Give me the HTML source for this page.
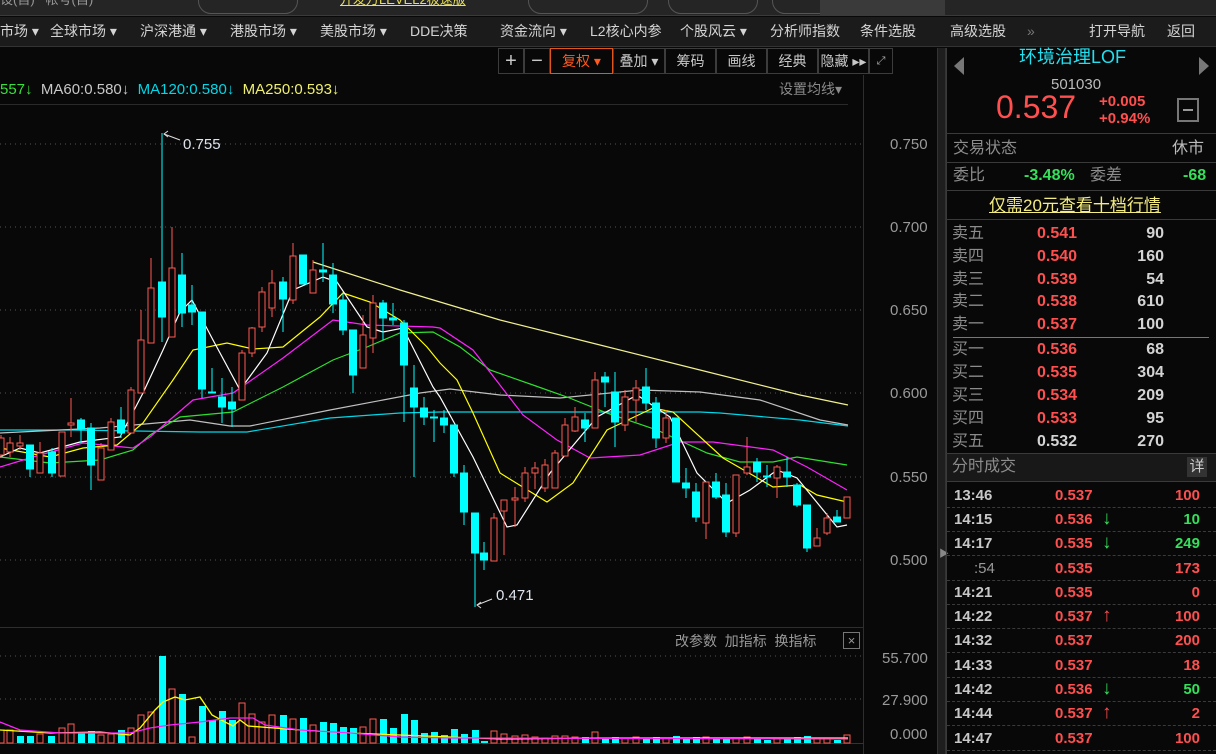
<!DOCTYPE html>
<html><head><meta charset="utf-8"><style>
*{margin:0;padding:0;box-sizing:border-box}
body{width:1216px;height:754px;background:#080808;overflow:hidden;position:relative;font-family:"Liberation Sans","Noto Sans CJK SC",sans-serif;color:#ccc;line-height:1.2}
.a{position:absolute;white-space:nowrap}
.top{left:0;top:0;width:1216px;height:16px;background:#252525;border-bottom:1px solid #3a3a3a}
.pill{position:absolute;top:-12px;height:26px;border:1px solid #555;border-radius:13px}
.menu{left:0;top:17px;width:1216px;height:30px;background:#1b1b1b;border-bottom:1px solid #333;font-size:14px;color:#d4d4d4}
.menu span{position:absolute;top:6px}
.tb{position:absolute;top:48px;height:26px;border:1px solid #3c3c3c;font-size:14px;color:#c8c8c8;text-align:center;line-height:24px}
.r{color:#ff4f4f}.g{color:#35e05a}.gr{color:#9a9a9a}.w{color:#d8d8d8}
.ob{position:absolute;left:952px;font-size:16px;width:212px;height:22px}
.ob span{line-height:22px;top:0}
.ob .l{position:absolute;left:0;color:#8c8c8c}
.ob .p{position:absolute;left:85px;font-weight:bold}
.ob .v{position:absolute;right:0;font-weight:bold;color:#d4d4d4;text-align:right}
.tr{position:absolute;left:947px;width:269px;height:24px;border-bottom:1px dashed #3a3a3a;font-size:15px;font-weight:bold}
.tr .t{position:absolute;left:7px;top:3px;color:#c8c8c8}
.tr .p{position:absolute;left:108px;top:3px;color:#ff4f4f}
.tr .v{position:absolute;right:16px;top:3px;text-align:right}
.tr .ar{position:absolute;left:155px;top:0px;font-size:19px}
.lb{line-height:20px}
</style></head><body>
<div class="a top">
<div class="pill" style="left:198px;width:100px"></div>
<div class="a" style="left:340px;top:-8px;font-size:13px;color:#e8e060;text-decoration:underline">开发万LEVEL2极速版</div>
<div class="pill" style="left:528px;width:120px"></div>
<div class="pill" style="left:668px;width:90px"></div>
<div class="pill" style="left:772px;width:130px"></div>
<div class="a" style="left:820px;top:0;width:125px;height:16px;background:#3a3a3a"></div>
<div class="a" style="left:0;top:-8px;font-size:13px;color:#999">设(自) &nbsp; 帐号(自)</div>
</div>
<div class="a menu">
<span style="left:0">市场 ▾</span><span style="left:50px">全球市场 ▾</span><span style="left:140px">沪深港通 ▾</span><span style="left:230px">港股市场 ▾</span><span style="left:320px">美股市场 ▾</span><span style="left:410px">DDE决策</span><span style="left:500px">资金流向 ▾</span><span style="left:590px">L2核心内参</span><span style="left:680px">个股风云 ▾</span><span style="left:770px">分析师指数</span><span style="left:860px">条件选股</span><span style="left:950px">高级选股</span><span style="left:1027px;color:#777">»</span><span style="left:1089px">打开导航</span><span style="left:1167px">返回</span>
</div>
<div class="tb" style="left:498px;width:26px;font-size:20px">+</div>
<div class="tb" style="left:524px;width:26px;font-size:20px">−</div>
<div class="tb" style="left:550px;width:63px;border-color:#e0561b;color:#ff5a1f">复权 ▾</div>
<div class="tb" style="left:613px;width:52px">叠加 ▾</div>
<div class="tb" style="left:665px;width:51px">筹码</div>
<div class="tb" style="left:716px;width:51px">画线</div>
<div class="tb" style="left:767px;width:51px">经典</div>
<div class="tb" style="left:818px;width:51px">隐藏 ▸▸</div>
<div class="tb" style="left:869px;width:24px;font-size:11px;color:#aaa">⤢</div>
<div class="a" style="left:0;top:81px;font-size:15px"><span style="color:#39e03b">557↓</span> <span style="color:#c8c8c8">&nbsp;MA60:0.580↓</span> <span style="color:#00d8e8">&nbsp;MA120:0.580↓</span> <span style="color:#f0f070">&nbsp;MA250:0.593↓</span></div>
<div class="a" style="left:779px;top:81px;font-size:14px;color:#8a8a8a">设置均线▾</div>
<div class="a" style="left:0;top:104px;width:848px;height:1px;background:#2a2a2a"></div>
<div class="a" style="left:863px;top:75px;width:1px;height:679px;background:#2e2e2e"></div>
<div class="a" style="left:0;top:627px;width:863px;height:1px;background:#2e2e2e"></div>
<div class="a" style="left:937px;top:48px;width:9px;height:706px;background:#1e1e1e;border-left:1px solid #333;border-right:1px solid #333"></div>
<div class="a" style="left:939px;top:549px;font-size:10px;color:#888">▶</div>
<div class="a gr" style="left:890px;top:136px;font-size:15px">0.750</div>
<div class="a gr" style="left:890px;top:219px;font-size:15px">0.700</div>
<div class="a gr" style="left:890px;top:302px;font-size:15px">0.650</div>
<div class="a gr" style="left:890px;top:385px;font-size:15px">0.600</div>
<div class="a gr" style="left:890px;top:469px;font-size:15px">0.550</div>
<div class="a gr" style="left:890px;top:552px;font-size:15px">0.500</div>
<div class="a gr" style="left:882px;top:650px;font-size:15px">55.700</div>
<div class="a gr" style="left:882px;top:692px;font-size:15px">27.900</div>
<div class="a gr" style="left:890px;top:726px;font-size:15px">0.000</div>
<div class="a" style="left:675px;top:633px;font-size:14px;color:#999">改参数 &nbsp;加指标 &nbsp;换指标</div>
<div class="a" style="left:843px;top:632px;width:17px;height:17px;border:1px solid #777;color:#999;font-size:13px;line-height:15px;text-align:center">×</div>
<svg class="a" style="left:0;top:0" width="864" height="754" viewBox="0 0 864 754">
<g stroke="#555" stroke-dasharray="1 4" stroke-width="1">
<line x1="0" y1="144" x2="864" y2="144"/><line x1="0" y1="227" x2="864" y2="227"/><line x1="0" y1="310" x2="864" y2="310"/><line x1="0" y1="393" x2="864" y2="393"/><line x1="0" y1="477" x2="864" y2="477"/><line x1="0" y1="560" x2="864" y2="560"/>
<line x1="0" y1="656" x2="864" y2="656"/><line x1="0" y1="699" x2="864" y2="699"/>
</g>
<line x1="0" y1="743.5" x2="864" y2="743.5" stroke="#333"/>
<g fill="none" stroke-width="1.2">
<polyline stroke="#f0f090" points="313,262 400,290 500,320 600,345 700,370 800,395 848,405"/>
<polyline stroke="#00d8e8" points="0,430 70,430 200,432 247,432 330,418 400,413 440,412 700,412 720,413 800,420 848,426"/>
<polyline stroke="#c0c0c0" points="0,433 100,428 190,420 230,426 250,426 330,410 420,393 450,389 500,395 560,398 640,390 700,392 760,400 820,420 848,425"/>
<polyline stroke="#2ee02e" points="0,457 50,463 100,460 133,450 150,435 180,417 233,412 283,387 333,360 367,347 400,333 433,332 460,347 490,370 533,385 567,397 607,413 657,430 707,453 740,462 773,462 797,457 847,465"/>
<polyline stroke="#ff22ff" points="0,467 33,457 83,443 133,448 150,437 193,400 233,393 283,358 333,320 367,325 433,327 440,328 473,350 523,415 557,440 590,458 640,455 680,442 713,442 773,450 807,467 847,490"/>
<polyline stroke="#ffff00" points="0,448 50,457 83,448 117,445 143,423 173,380 193,350 227,343 253,349 283,347 320,317 343,293 370,302 400,320 427,347 440,363 457,380 473,413 500,473 547,502 573,483 607,430 653,408 673,412 723,458 773,487 800,485 817,495 847,502"/>
<polyline stroke="#ffffff" points="0,457 20,448 40,453 80,442 120,437 143,393 163,350 180,312 192,300 213,340 240,390 267,353 293,290 323,277 337,282 367,327 383,332 403,328 433,387 440,397 473,457 507,527 517,525 550,473 597,417 637,395 670,417 697,473 727,503 750,490 777,470 797,478 837,527 847,525"/>
</g>
<g stroke="#00ffff" fill="#00ffff">
<line x1="30" y1="445" x2="30" y2="477"/><rect x="26.5" y="445" width="7" height="24"/>
<line x1="52" y1="448" x2="52" y2="477"/><rect x="48.5" y="452" width="7" height="21"/>
<line x1="81" y1="418" x2="81" y2="443"/><rect x="77.5" y="420" width="7" height="9"/>
<line x1="91" y1="423" x2="91" y2="490"/><rect x="87.5" y="428" width="7" height="37"/>
<line x1="121" y1="407" x2="121" y2="438"/><rect x="117.5" y="420" width="7" height="13"/>
<line x1="162" y1="133" x2="162" y2="342"/><rect x="158.5" y="282" width="7" height="35"/>
<line x1="182" y1="253" x2="182" y2="327"/><rect x="178.5" y="275" width="7" height="38"/>
<line x1="192" y1="285" x2="192" y2="325"/><rect x="188.5" y="305" width="7" height="7"/>
<line x1="202" y1="312" x2="202" y2="398"/><rect x="198.5" y="312" width="7" height="77"/>
<line x1="212" y1="368" x2="212" y2="393"/><rect x="208.5" y="392" width="7" height="1"/>
<line x1="222" y1="378" x2="222" y2="423"/><rect x="218.5" y="397" width="7" height="10"/>
<line x1="232" y1="387" x2="232" y2="427"/><rect x="228.5" y="402" width="7" height="7"/>
<line x1="283" y1="277" x2="283" y2="332"/><rect x="279.5" y="282" width="7" height="17"/>
<rect x="299.5" y="255" width="7" height="29"/>
<line x1="323" y1="243" x2="323" y2="282"/><rect x="319.5" y="270" width="7" height="2"/>
<line x1="333" y1="263" x2="333" y2="313"/><rect x="329.5" y="275" width="7" height="29"/>
<line x1="343" y1="293" x2="343" y2="335"/><rect x="339.5" y="300" width="7" height="30"/>
<line x1="353" y1="330" x2="353" y2="393"/><rect x="349.5" y="330" width="7" height="45"/>
<line x1="383" y1="300" x2="383" y2="340"/><rect x="379.5" y="303" width="7" height="15"/>
<line x1="393" y1="303" x2="393" y2="325"/><rect x="389.5" y="318" width="7" height="2"/>
<line x1="404" y1="320" x2="404" y2="422"/><rect x="400.5" y="323" width="7" height="42"/>
<line x1="414" y1="365" x2="414" y2="477"/><rect x="410.5" y="388" width="7" height="19"/>
<line x1="424" y1="397" x2="424" y2="425"/><rect x="420.5" y="408" width="7" height="9"/>
<line x1="434" y1="410" x2="434" y2="442"/><rect x="430.5" y="417" width="7" height="1"/>
<line x1="444" y1="410" x2="444" y2="433"/><rect x="440.5" y="418" width="7" height="7"/>
<line x1="454" y1="425" x2="454" y2="477"/><rect x="450.5" y="425" width="7" height="48"/>
<line x1="464" y1="465" x2="464" y2="525"/><rect x="460.5" y="473" width="7" height="39"/>
<line x1="475" y1="513" x2="475" y2="607"/><rect x="471.5" y="513" width="7" height="40"/>
<line x1="484" y1="542" x2="484" y2="570"/><rect x="480.5" y="553" width="7" height="7"/>
<line x1="585" y1="413" x2="585" y2="442"/><rect x="581.5" y="420" width="7" height="8"/>
<line x1="605" y1="372" x2="605" y2="407"/><rect x="601.5" y="377" width="7" height="5"/>
<line x1="615" y1="372" x2="615" y2="447"/><rect x="611.5" y="392" width="7" height="30"/>
<line x1="646" y1="368" x2="646" y2="410"/><rect x="642.5" y="387" width="7" height="16"/>
<line x1="656" y1="397" x2="656" y2="448"/><rect x="652.5" y="403" width="7" height="35"/>
<rect x="672.5" y="418" width="7" height="64"/>
<line x1="686" y1="468" x2="686" y2="498"/><rect x="682.5" y="483" width="7" height="5"/>
<line x1="696" y1="483" x2="696" y2="522"/><rect x="692.5" y="492" width="7" height="25"/>
<line x1="716" y1="473" x2="716" y2="499"/><rect x="712.5" y="482" width="7" height="15"/>
<line x1="726" y1="483" x2="726" y2="537"/><rect x="722.5" y="495" width="7" height="37"/>
<line x1="757" y1="458" x2="757" y2="482"/><rect x="753.5" y="462" width="7" height="10"/>
<line x1="767" y1="465" x2="767" y2="487"/><rect x="763.5" y="476" width="7" height="1"/>
<line x1="787" y1="457" x2="787" y2="487"/><rect x="783.5" y="472" width="7" height="5"/>
<line x1="797" y1="483" x2="797" y2="507"/><rect x="793.5" y="485" width="7" height="20"/>
<line x1="807" y1="505" x2="807" y2="552"/><rect x="803.5" y="505" width="7" height="43"/>
<line x1="837" y1="510" x2="837" y2="522"/><rect x="833.5" y="517" width="7" height="5"/>
</g>
<g stroke="#ff5a52" fill="#070707">
<line x1="1" y1="435" x2="1" y2="458"/><rect x="-2" y="438" width="6" height="17"/>
<line x1="10" y1="437" x2="10" y2="457"/><rect x="7" y="443" width="6" height="9"/>
<line x1="20" y1="435" x2="20" y2="450"/><rect x="17" y="443" width="6" height="3"/>
<line x1="40" y1="442" x2="40" y2="473"/><rect x="37" y="453" width="6" height="20"/>
<rect x="59" y="432" width="6" height="44"/>
<line x1="71" y1="398" x2="71" y2="437"/><rect x="68" y="423" width="6" height="2"/>
<line x1="101" y1="443" x2="101" y2="480"/><rect x="98" y="448" width="6" height="32"/>
<line x1="111" y1="418" x2="111" y2="450"/><rect x="108" y="422" width="6" height="28"/>
<line x1="131" y1="387" x2="131" y2="433"/><rect x="128" y="390" width="6" height="43"/>
<line x1="141" y1="310" x2="141" y2="393"/><rect x="138" y="340" width="6" height="53"/>
<line x1="151" y1="258" x2="151" y2="343"/><rect x="148" y="288" width="6" height="55"/>
<line x1="172" y1="227" x2="172" y2="337"/><rect x="169" y="268" width="6" height="69"/>
<line x1="242" y1="350" x2="242" y2="400"/><rect x="239" y="353" width="6" height="47"/>
<line x1="252" y1="327" x2="252" y2="357"/><rect x="249" y="328" width="6" height="25"/>
<line x1="262" y1="287" x2="262" y2="332"/><rect x="259" y="292" width="6" height="35"/>
<line x1="272" y1="270" x2="272" y2="317"/><rect x="269" y="283" width="6" height="25"/>
<line x1="293" y1="243" x2="293" y2="304"/><rect x="290" y="256" width="6" height="44"/>
<line x1="313" y1="260" x2="313" y2="293"/><rect x="310" y="270" width="6" height="23"/>
<line x1="363" y1="315" x2="363" y2="368"/><rect x="360" y="335" width="6" height="33"/>
<line x1="373" y1="295" x2="373" y2="353"/><rect x="370" y="303" width="6" height="35"/>
<line x1="494" y1="513" x2="494" y2="561"/><rect x="491" y="518" width="6" height="43"/>
<line x1="504" y1="500" x2="504" y2="555"/><rect x="501" y="500" width="6" height="11"/>
<line x1="515" y1="487" x2="515" y2="527"/><rect x="512" y="498" width="6" height="2"/>
<line x1="525" y1="467" x2="525" y2="502"/><rect x="522" y="473" width="6" height="25"/>
<line x1="535" y1="462" x2="535" y2="489"/><rect x="532" y="468" width="6" height="5"/>
<line x1="545" y1="459" x2="545" y2="492"/><rect x="542" y="465" width="6" height="23"/>
<line x1="555" y1="450" x2="555" y2="488"/><rect x="552" y="453" width="6" height="35"/>
<line x1="565" y1="418" x2="565" y2="456"/><rect x="562" y="425" width="6" height="31"/>
<line x1="575" y1="407" x2="575" y2="432"/><rect x="572" y="417" width="6" height="14"/>
<line x1="595" y1="372" x2="595" y2="428"/><rect x="592" y="380" width="6" height="48"/>
<line x1="625" y1="390" x2="625" y2="431"/><rect x="622" y="397" width="6" height="28"/>
<line x1="636" y1="380" x2="636" y2="422"/><rect x="633" y="388" width="6" height="12"/>
<line x1="666" y1="410" x2="666" y2="443"/><rect x="663" y="418" width="6" height="20"/>
<line x1="706" y1="482" x2="706" y2="539"/><rect x="703" y="482" width="6" height="41"/>
<line x1="736" y1="475" x2="736" y2="537"/><rect x="733" y="475" width="6" height="58"/>
<line x1="747" y1="437" x2="747" y2="475"/><rect x="744" y="467" width="6" height="6"/>
<line x1="777" y1="465" x2="777" y2="498"/><rect x="774" y="467" width="6" height="11"/>
<line x1="817" y1="528" x2="817" y2="546"/><rect x="814" y="538" width="6" height="8"/>
<line x1="827" y1="513" x2="827" y2="535"/><rect x="824" y="518" width="6" height="15"/>
<rect x="844" y="497" width="6" height="21"/>
</g>
<g stroke="#ddd" fill="none"><line x1="164" y1="134" x2="180" y2="140"/><polyline points="168,131 164,134 168,137"/><line x1="477" y1="605" x2="492" y2="599"/><polyline points="481,602 477,605 481,608"/></g>
<text x="183" y="149" fill="#dde4ee" font-size="15" font-family="Liberation Sans">0.755</text>
<text x="496" y="600" fill="#dde4ee" font-size="15" font-family="Liberation Sans">0.471</text>
<g fill="#00ffff">
<rect x="17" y="736" width="7" height="7"/><rect x="27" y="736" width="7" height="7"/><rect x="48" y="736" width="7" height="7"/><rect x="78" y="732" width="7" height="11"/><rect x="88" y="731" width="7" height="12"/><rect x="118" y="730" width="7" height="13"/><rect x="159" y="656" width="7" height="87"/><rect x="179" y="694" width="7" height="49"/><rect x="199" y="706" width="7" height="37"/><rect x="209" y="720" width="7" height="23"/><rect x="219" y="711" width="7" height="32"/><rect x="229" y="720" width="7" height="23"/><rect x="280" y="715" width="7" height="28"/><rect x="300" y="718" width="7" height="25"/><rect x="320" y="722" width="7" height="21"/><rect x="330" y="723" width="7" height="20"/><rect x="340" y="727" width="7" height="16"/><rect x="350" y="728" width="7" height="15"/><rect x="380" y="719" width="7" height="24"/><rect x="390" y="728" width="7" height="15"/><rect x="401" y="714" width="7" height="29"/><rect x="411" y="720" width="7" height="23"/><rect x="421" y="733" width="7" height="10"/><rect x="431" y="732" width="7" height="11"/><rect x="441" y="735" width="7" height="8"/><rect x="451" y="729" width="7" height="14"/><rect x="461" y="734" width="7" height="9"/><rect x="472" y="730" width="7" height="13"/><rect x="481" y="741" width="7" height="2"/><rect x="582" y="737" width="7" height="6"/><rect x="602" y="739" width="7" height="4"/><rect x="612" y="737" width="7" height="6"/><rect x="643" y="738" width="7" height="5"/><rect x="653" y="737" width="7" height="6"/><rect x="673" y="736" width="7" height="7"/><rect x="683" y="739" width="7" height="4"/><rect x="693" y="737" width="7" height="6"/><rect x="713" y="739" width="7" height="4"/><rect x="723" y="738" width="7" height="5"/><rect x="754" y="738" width="7" height="5"/><rect x="764" y="740" width="7" height="3"/><rect x="784" y="739" width="7" height="4"/><rect x="794" y="737" width="7" height="6"/><rect x="804" y="736" width="7" height="7"/><rect x="834" y="740" width="7" height="3"/>
</g>
<g fill="none" stroke="#ff5a52">
<rect x="-2" y="730" width="6" height="13"/><rect x="7" y="730" width="6" height="13"/><rect x="37" y="734" width="6" height="9"/><rect x="59" y="728" width="6" height="15"/><rect x="68" y="724" width="6" height="19"/><rect x="98" y="735" width="6" height="8"/><rect x="108" y="734" width="6" height="9"/><rect x="128" y="728" width="6" height="15"/><rect x="138" y="715" width="6" height="28"/><rect x="148" y="712" width="6" height="31"/><rect x="169" y="689" width="6" height="54"/><rect x="189" y="737" width="6" height="6"/><rect x="239" y="703" width="6" height="40"/><rect x="249" y="714" width="6" height="29"/><rect x="259" y="722" width="6" height="21"/><rect x="269" y="715" width="6" height="28"/><rect x="290" y="719" width="6" height="24"/><rect x="310" y="725" width="6" height="18"/><rect x="360" y="727" width="6" height="16"/><rect x="370" y="719" width="6" height="24"/><rect x="491" y="731" width="6" height="12"/><rect x="501" y="734" width="6" height="9"/><rect x="512" y="736" width="6" height="7"/><rect x="522" y="735" width="6" height="8"/><rect x="532" y="737" width="6" height="6"/><rect x="542" y="738" width="6" height="5"/><rect x="552" y="736" width="6" height="7"/><rect x="562" y="736" width="6" height="7"/><rect x="572" y="737" width="6" height="6"/><rect x="592" y="732" width="6" height="11"/><rect x="622" y="738" width="6" height="5"/><rect x="633" y="737" width="6" height="6"/><rect x="663" y="738" width="6" height="5"/><rect x="703" y="737" width="6" height="6"/><rect x="733" y="738" width="6" height="5"/><rect x="744" y="737" width="6" height="6"/><rect x="774" y="739" width="6" height="4"/><rect x="814" y="739" width="6" height="4"/><rect x="824" y="738" width="6" height="5"/><rect x="844" y="735" width="6" height="8"/>
</g>
<g fill="none" stroke-width="1.3">
<polyline stroke="#ffff00" points="0,730 50,733 100,732 130,735 140,728 155,710 163,702 175,697 185,700 200,697 212,715 225,722 233,726 240,720 248,726 300,730 350,733 400,735 450,737 500,739 600,738 848,738"/>
<polyline stroke="#ff22ff" points="0,722 20,730 60,733 130,733 150,728 170,725 200,722 230,718 253,718 265,725 300,730 350,733 400,737 450,738 848,739"/>
</g>
</svg>
<div class="a" style="left:946px;top:48px;width:1px;height:706px;background:#3a3a3a"></div>
<div class="a" style="left:954px;top:57px;width:0;height:0;border-top:9px solid transparent;border-bottom:9px solid transparent;border-right:10px solid #777"></div>
<div class="a" style="left:1199px;top:57px;width:0;height:0;border-top:9px solid transparent;border-bottom:9px solid transparent;border-left:10px solid #777"></div>
<div class="a" style="left:1019px;top:47px;font-size:18px;color:#22e0f0">环境治理LOF</div>
<div class="a" style="left:1051px;top:76px;font-size:15px;color:#bbb">501030</div>
<div class="a r" style="left:996px;top:88px;font-size:32px">0.537</div>
<div class="a r" style="left:1099px;top:93px;font-size:15px;font-weight:bold;line-height:17px">+0.005<br>+0.94%</div>
<div class="a" style="left:1177px;top:98px;width:22px;height:24px;border:2px solid #777"><div style="margin:9px 4px 0;height:2px;background:#999"></div></div>
<div class="a" style="left:947px;top:133px;width:269px;height:1px;background:#3a3a3a"></div>
<div class="a lb" style="left:953px;top:139px;font-size:16px;color:#8c8c8c">交易状态</div>
<div class="a lb" style="left:1172px;top:139px;font-size:16px;color:#bbb">休市</div>
<div class="a" style="left:947px;top:162px;width:269px;height:1px;background:#3a3a3a"></div>
<div class="a lb" style="left:953px;top:166px;font-size:16px;color:#8c8c8c">委比</div>
<div class="a g lb" style="left:1024px;top:166px;font-size:16px;font-weight:bold">-3.48%</div>
<div class="a lb" style="left:1090px;top:166px;font-size:16px;color:#8c8c8c">委差</div>
<div class="a g lb" style="left:1183px;top:166px;font-size:16px;font-weight:bold">-68</div>
<div class="a" style="left:947px;top:190px;width:269px;height:1px;background:#3a3a3a"></div>
<div class="a lb" style="left:989px;top:196px;font-size:17px;color:#f4ec80;text-decoration:underline">仅需20元查看十档行情</div>
<div class="a" style="left:947px;top:219px;width:269px;height:1px;background:#3a3a3a"></div>
<div class="ob" style="top:223px"><span class="l">卖五</span><span class="p r">0.541</span><span class="v">90</span></div>
<div class="ob" style="top:246px"><span class="l">卖四</span><span class="p r">0.540</span><span class="v">160</span></div>
<div class="ob" style="top:269px"><span class="l">卖三</span><span class="p r">0.539</span><span class="v">54</span></div>
<div class="ob" style="top:291px"><span class="l">卖二</span><span class="p r">0.538</span><span class="v">610</span></div>
<div class="ob" style="top:314px"><span class="l">卖一</span><span class="p r">0.537</span><span class="v">100</span></div>
<div class="a" style="left:953px;top:337px;width:256px;height:1px;background:#777"></div>
<div class="ob" style="top:339px"><span class="l">买一</span><span class="p r">0.536</span><span class="v">68</span></div>
<div class="ob" style="top:362px"><span class="l">买二</span><span class="p r">0.535</span><span class="v">304</span></div>
<div class="ob" style="top:385px"><span class="l">买三</span><span class="p r">0.534</span><span class="v">209</span></div>
<div class="ob" style="top:408px"><span class="l">买四</span><span class="p r">0.533</span><span class="v">95</span></div>
<div class="ob" style="top:431px"><span class="l">买五</span><span class="p" style="color:#d4d4d4">0.532</span><span class="v">270</span></div>
<div class="a" style="left:947px;top:453px;width:269px;height:29px;background:#181818;border-top:1px solid #3a3a3a;border-bottom:1px solid #3a3a3a"></div>
<div class="a lb" style="left:952px;top:457px;font-size:16px;color:#8c8c8c">分时成交</div>
<div class="a" style="left:1187px;top:457px;width:20px;height:20px;background:#333;font-size:15px;color:#ccc;text-align:center;line-height:20px">详</div>
<div class="tr" style="top:484px"><span class="t">13:46</span><span class="p">0.537</span><span class="v r">100</span></div>
<div class="tr" style="top:508px"><span class="t">14:15</span><span class="p">0.536</span><span class="ar g">↓</span><span class="v g">10</span></div>
<div class="tr" style="top:532px"><span class="t">14:17</span><span class="p">0.535</span><span class="ar g">↓</span><span class="v g">249</span></div>
<div class="tr" style="top:557px"><span class="t" style="left:27px;font-weight:normal;color:#999">:54</span><span class="p">0.535</span><span class="v r">173</span></div>
<div class="tr" style="top:581px"><span class="t">14:21</span><span class="p">0.535</span><span class="v r">0</span></div>
<div class="tr" style="top:605px"><span class="t">14:22</span><span class="p">0.537</span><span class="ar r">↑</span><span class="v r">100</span></div>
<div class="tr" style="top:629px"><span class="t">14:32</span><span class="p">0.537</span><span class="v r">200</span></div>
<div class="tr" style="top:654px"><span class="t">14:33</span><span class="p">0.537</span><span class="v r">18</span></div>
<div class="tr" style="top:678px"><span class="t">14:42</span><span class="p">0.536</span><span class="ar g">↓</span><span class="v g">50</span></div>
<div class="tr" style="top:702px"><span class="t">14:44</span><span class="p">0.537</span><span class="ar r">↑</span><span class="v r">2</span></div>
<div class="tr" style="top:727px"><span class="t">14:47</span><span class="p">0.537</span><span class="v r">100</span></div>
</body></html>
